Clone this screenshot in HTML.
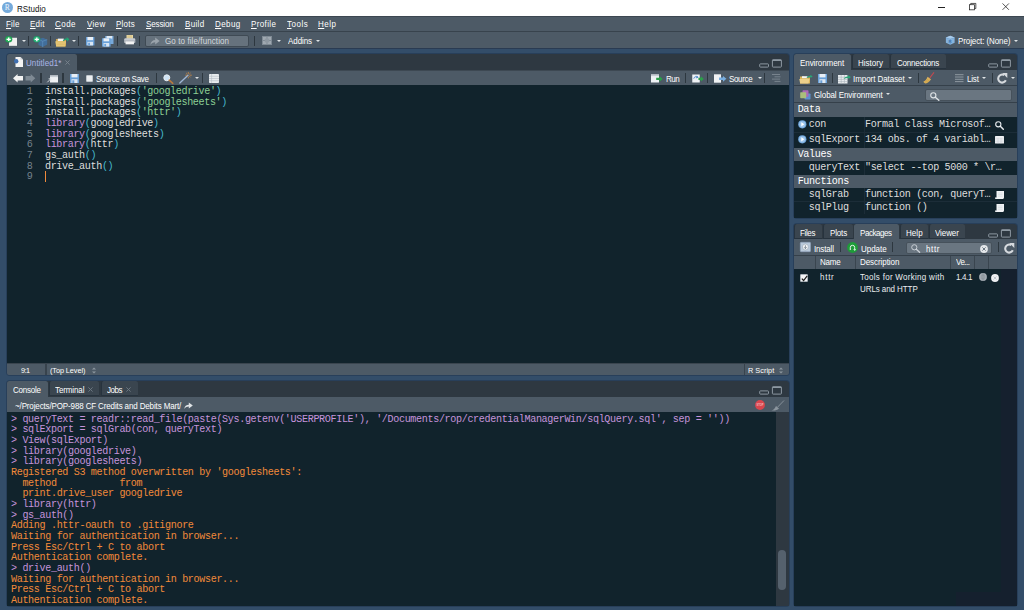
<!DOCTYPE html>
<html>
<head>
<meta charset="utf-8">
<title>RStudio</title>
<style>
*{box-sizing:border-box;margin:0;padding:0}
html,body{width:1024px;height:610px;overflow:hidden;background:#334d69;font-family:"Liberation Sans",sans-serif}
.a,.u,.m,.sep{position:absolute}
.u{font-family:"Liberation Sans",sans-serif;font-size:8.7px;line-height:10px;color:#fff;white-space:nowrap;transform:scaleX(.92);transform-origin:0 0}
.m{font-family:"Liberation Mono",monospace;font-size:10.1px;letter-spacing:-0.371px;line-height:10.667px;color:#dedede;white-space:pre}
.chrome{background:#4d5a66}
.dark{background:#11232c}
.tabrow{background:#2e3841}
.itab{background:#3a454f;border-radius:2.5px 2.5px 0 0;border-left:1px solid #27333e;border-bottom:1px solid #27333e}
.ol{position:absolute;background:#283f5a;border-radius:4px}
.bl{position:absolute;height:1px;background:#3d4852}
.atab{background:#4d5a66;border-radius:2.5px 2.5px 0 0}
.sep{width:1.200px;background:#2d373f;height:10px;margin-left:-0.200px}
.k{color:#c594db}.p{color:#47b9cc}.s{color:#8ccf94}
.ci{color:#c594db}.co{color:#f28a3a}
.ar{position:absolute;width:0;height:0;border-left:2px solid transparent;border-right:2px solid transparent;border-top:2.5px solid #dfe3e6}
svg{position:absolute;overflow:visible}
u{text-decoration-thickness:0.700px;text-underline-offset:1.100px}
</style>
</head>
<body>
<!-- ================= TITLE BAR ================= -->
<div class="a" style="left:0;top:0;width:1024px;height:16.5px;background:#fff"></div>
<div class="a" style="left:1.7px;top:2.2px;width:11px;height:11px;border-radius:50%;background:#75aadb"></div>
<div class="u" style="left:4.700px;top:3.100px;font-family:'Liberation Serif',serif;font-size:7.600px;line-height:9px;color:#eef5fb;transform:none">R</div>
<div class="u" style="left:16.8px;top:3.7px;color:#111;letter-spacing:0.04px">RStudio</div>
<!-- window controls -->
<div class="a" style="left:938px;top:7.3px;width:7px;height:1px;background:#222"></div>
<svg style="left:969.400px;top:3.400px" width="7.700" height="7.700" viewBox="0 0 9 9"><rect x="0.5" y="2" width="6" height="6" fill="#fff" stroke="#222" stroke-width="0.9"/><path d="M2 2V0.5H8V6.5H6.5" fill="none" stroke="#222" stroke-width="0.9"/></svg>
<svg style="left:1002.200px;top:3.400px" width="7.900" height="7.700" viewBox="0 0 9 9"><path d="M0.5 0.5L8 8M8 0.5L0.5 8" stroke="#222" stroke-width="0.9" fill="none"/></svg>

<!-- ================= MENU BAR ================= -->
<div class="a" style="left:0;top:16.3px;width:1024px;height:15.4px;background:#4d5a66;border-top:1.2px solid #3c4751"></div>
<div class="u" style="left:5.8px;top:19.2px;letter-spacing:0.18px"><u>F</u>ile</div>
<div class="u" style="left:30.1px;top:19.2px;letter-spacing:0.28px"><u>E</u>dit</div>
<div class="u" style="left:55.3px;top:19.2px;letter-spacing:0.50px"><u>C</u>ode</div>
<div class="u" style="left:86.5px;top:19.2px;letter-spacing:0.35px"><u>V</u>iew</div>
<div class="u" style="left:116.0px;top:19.2px;letter-spacing:0.24px"><u>P</u>lots</div>
<div class="u" style="left:145.8px;top:19.2px;letter-spacing:-0.14px"><u>S</u>ession</div>
<div class="u" style="left:185.1px;top:19.2px;letter-spacing:0.37px"><u>B</u>uild</div>
<div class="u" style="left:215.3px;top:19.2px;letter-spacing:0.47px"><u>D</u>ebug</div>
<div class="u" style="left:251.3px;top:19.2px;letter-spacing:0.40px"><u>P</u>rofile</div>
<div class="u" style="left:286.8px;top:19.2px;letter-spacing:0.54px"><u>T</u>ools</div>
<div class="u" style="left:318.3px;top:19.2px;letter-spacing:0.53px"><u>H</u>elp</div>

<!-- ================= MAIN TOOLBAR ================= -->
<div class="a" style="left:0;top:31.2px;width:1024px;height:17.6px;background:#4d5a66;border-top:1.2px solid #38434d;border-bottom:1.4px solid #2a3b52"></div>
<div id="tb-icons">
<!-- new file -->
<svg style="left:4.500px;top:35.500px" width="13" height="10.600" viewBox="0 0 13 12" preserveAspectRatio="none"><path d="M4 2h8v9.300H4z" fill="#f0f0f0"/><path d="M4 10.300h8v1H4z" fill="#cfd3d6"/><circle cx="3.700" cy="3.700" r="3.600" fill="#1f9a4d"/><circle cx="3.700" cy="3.700" r="2.900" fill="#2fb463"/><path d="M1.600 3.700h4.200M3.700 1.600v4.200" stroke="#fff" stroke-width="1.400"/></svg>
<div class="ar" style="left:21.500px;top:39.800px"></div>
<div class="sep" style="left:28px;top:35.500px"></div>
<!-- new project -->
<svg style="left:32.500px;top:35.500px" width="15" height="11.800" viewBox="0 0 15 13" preserveAspectRatio="none"><path d="M5.500 3.500l4.500-1.500 4.200 2v5.500l-4.500 2.700-4.200-2.400z" fill="#3f72a4" opacity="0.850"/><path d="M9.700 5.800v6.400M5.500 3.700l4.200 2.100 4.500-1.800" stroke="#6fa0cf" stroke-width="0.600" fill="none" opacity="0.800"/><circle cx="3.800" cy="3.700" r="3.600" fill="#1f9a66"/><circle cx="3.800" cy="3.700" r="2.900" fill="#2fb47e"/><path d="M1.700 3.700h4.200M3.800 1.600v4.200" stroke="#fff" stroke-width="1.400"/></svg>
<div class="sep" style="left:50.300px;top:35.500px"></div>
<!-- open folder -->
<svg style="left:55px;top:35.500px" width="15" height="11" viewBox="0 0 15 11"><path d="M1 3h3.500l1 1H11v6.500H1z" fill="#c9a24a"/><path d="M2.800 2.600h6v2.400h-6z" fill="#f1f1f1"/><path d="M0.300 5.300h10.700l-1 5.200H1.200z" fill="#e6c878"/><path d="M1.500 7h8.500M1.700 8.600h8" stroke="#d4b060" stroke-width="0.500"/><path d="M7.800 4.400c1.200-1.700 2.800-2 4-1.900l-.2-1.500 2.900 2.300-2.500 2.100 0-1.400c-1.400-.200-2.800.300-3.400 1.200z" fill="#22a373"/></svg>
<div class="ar" style="left:72px;top:39.800px"></div>
<div class="sep" style="left:78.300px;top:35.500px"></div>
<!-- save -->
<svg style="left:86px;top:36.600px" width="8.800" height="8.800" viewBox="0 0 10 10"><path d="M0 0h9.600v9.600H0z" fill="#6aa1d9"/><path d="M1.600 0h6.400v3.600H1.600z" fill="#e9f0f7"/><path d="M1.600 5.500h6.400v4.100H1.600z" fill="#d9e6f3"/><path d="M2.500 6.600h2v3h-2z" fill="#6aa1d9"/></svg>
<!-- save all -->
<svg style="left:102px;top:35.600px" width="12" height="11" viewBox="0 0 12 11"><path d="M3.200 0h8.300v8H3.200z" fill="#78a9da"/><path d="M4.600 0h5.600v2.600H4.600z" fill="#dfe9f3"/><path d="M0 2.300h8.600v8.300H0z" fill="#6aa1d9"/><path d="M1.500 2.300h5.700v3H1.500z" fill="#e9f0f7"/><path d="M1.500 7h5.700v3.600H1.500z" fill="#d9e6f3"/><path d="M2.300 7.900h1.800v2.700H2.300z" fill="#6aa1d9"/></svg>
<div class="sep" style="left:117.300px;top:35.500px"></div>
<!-- print -->
<svg style="left:124.200px;top:34.900px" width="11.500" height="10.400" viewBox="0 0 12 12" preserveAspectRatio="none"><path d="M2.600 0h6.800v4.500H2.600z" fill="#e6d5a0"/><path d="M3.600 1.200h4.800M3.600 2.600h4.800" stroke="#c9b67a" stroke-width="0.600"/><rect x="0.300" y="3.800" width="11.400" height="5.200" rx="1" fill="#c5cad0"/><path d="M0.300 6.200h11.400v2.800H0.300z" fill="#aeb4bb"/><path d="M1.600 7.400h8.800v3.400H1.600z" fill="#f3f3f3"/></svg>
<div class="sep" style="left:139.200px;top:35.500px"></div>
<!-- go to file/function -->
<div class="a" style="left:144.6px;top:34.6px;width:104px;height:12px;background:#66727d;border:1px solid #3f4a54;border-radius:2px"></div>
<svg style="left:150px;top:37px" width="10" height="8" viewBox="0 0 10 8"><path d="M0.3 8C0.8 4.8 2.8 3 5.2 3V0.6L9.6 4 5.2 7.4V5.2C3.2 5.2 1.6 6 0.3 8z" fill="#9aa3ab"/></svg>
<div class="u" style="left:164.8px;top:36px;color:#d3d8dc;letter-spacing:0.11px">Go to file/function</div>
<div class="sep" style="left:254.400px;top:35.500px"></div>
<!-- grid icon -->
<svg style="left:262px;top:36px" width="10" height="9" viewBox="0 0 10 9"><rect width="10" height="9" fill="#7f8a94"/><path d="M1 1h3.500v3H1zM5.500 1H9v3H5.500zM1 5h3.500v3H1zM5.500 5H9v3H5.500z" fill="#a0a9b1"/><rect x="2.800" y="2.600" width="4.400" height="3.800" fill="#8e98a1"/></svg>
<div class="ar" style="left:277.2px;top:39.8px"></div>
<div class="u" style="left:287.6px;top:36px;letter-spacing:-0.07px">Addins</div>
<div class="ar" style="left:316.2px;top:39.8px"></div>
<!-- project -->
<svg style="left:944.600px;top:35px" width="10.500" height="10.300" viewBox="0 0 12 11"><path d="M1 2.500L6 0.500l5 2v6L6 10.800 1 8.500z" fill="#86b3dd"/><path d="M6 3.700V10.800M1 2.600l5 1.300 5-1.300" stroke="#5a8fc4" stroke-width="0.600" fill="none"/><path d="M1 2.500L6 0.500l5 2L6 3.800z" fill="#a9cbea"/><text x="3.900" y="8.300" font-size="5" font-family="Liberation Sans" fill="#3f74ad" font-weight="bold">R</text></svg>
<div class="u" style="left:958.3px;top:36px;letter-spacing:-0.10px">Project: (None)</div>
<div class="ar" style="left:1014px;top:39.8px"></div>
</div>

<!-- pane outlines -->
<div class="ol" style="left:6px;top:53px;width:784px;height:323px"></div>
<div class="ol" style="left:6px;top:380px;width:784px;height:227px"></div>
<div class="ol" style="left:793px;top:53px;width:225px;height:166px"></div>
<div class="ol" style="left:793px;top:223px;width:225px;height:384px"></div>
<!-- ================= SOURCE PANE ================= -->
<div class="a tabrow" style="left:6.500px;top:53.7px;width:782px;height:17px;border-radius:3px 3px 0 0"></div>
<div class="a atab" style="left:6.500px;top:53.7px;width:70.500px;height:17px"></div>
<div class="a chrome" style="left:6.500px;top:70px;width:782px;height:15.3px"></div>
<div class="a dark" style="left:6.500px;top:85.4px;width:782px;height:278.5px"></div>
<div class="a chrome" style="left:6.500px;top:363.3px;width:782px;height:12px;border-top:1px solid #3a454f;border-radius:0 0 2px 2px"></div>
<div class="bl" style="left:77px;top:70px;width:711.500px"></div>
<div class="bl" style="left:851px;top:70px;width:166.300px"></div>
<div id="src-items">
<!-- tab -->
<svg style="left:13.8px;top:56.6px" width="9" height="10" viewBox="0 0 9 10"><path d="M1.5 0h5L9 2.5V10H1.5z" fill="#f4f4f4"/><path d="M6.5 0v2.5H9z" fill="#c9ced3"/><circle cx="2.2" cy="4.3" r="2.2" fill="#3f6fb0"/></svg>
<div class="u" style="left:26.1px;top:58.2px;color:#aab5e6;letter-spacing:0.09px">Untitled1*</div>
<svg style="left:65.3px;top:60.3px" width="5" height="5" viewBox="0 0 5 5"><path d="M0.4 0.4L4.6 4.6M4.6 0.4L0.4 4.6" stroke="#7d8892" stroke-width="0.800"/></svg>
<!-- pane min/max -->
<svg style="left:758.5px;top:59.2px" width="24" height="9" viewBox="0 0 24 9"><rect x="0.700" y="4.900" width="8.800" height="3.200" rx="0.700" fill="none" stroke="#8d98a2" stroke-width="1"/><rect x="13.400" y="0.800" width="9" height="7.300" rx="0.700" fill="none" stroke="#8d98a2" stroke-width="1"/><path d="M13.400 1.300h9" stroke="#8d98a2" stroke-width="1.400"/></svg>
<!-- toolbar -->
<svg style="left:13px;top:74.200px" width="23" height="9" viewBox="0 0 23 9"><path d="M0 4.300L4.600 0v2H10v4.600H4.600v2z" fill="#f2f2f2"/><path d="M22.300 4.300L17.700 0v2h-5.200v4.600h5.200v2z" fill="#7f8a94"/></svg>
<div class="sep" style="left:40.5px;top:72.8px"></div>
<svg style="left:46.5px;top:74.5px" width="11" height="8" viewBox="0 0 11 8"><path d="M3 0.5h8v7H3z" fill="#eef1f4"/><path d="M3 0.5h8v1.6H3z" fill="#c4cbd2"/><path d="M0.3 7.3L3.6 4M1.6 3.8h2.2v2.2" stroke="#dfe4e8" stroke-width="0.9" fill="none"/></svg>
<div class="sep" style="left:62.6px;top:72.8px"></div>
<svg style="left:70px;top:74px" width="9" height="9" viewBox="0 0 9 9"><path d="M0 0h9v9H0z" fill="#6aa1d9"/><path d="M1.5 0h6v3.4h-6z" fill="#e8eef5"/><path d="M1.5 5.2h6V9h-6z" fill="#dfe8f2"/><path d="M2.3 6.3h2v2.7h-2z" fill="#6aa1d9"/></svg>
<div class="a" style="left:85.6px;top:75px;width:7.4px;height:7.4px;background:#eceff1;border:0.8px solid #bfc6cc;border-radius:1px"></div>
<div class="u" style="left:96px;top:74px;letter-spacing:-0.330px">Source on Save</div>
<div class="sep" style="left:156.3px;top:72.8px"></div>
<svg style="left:163px;top:73.5px" width="11" height="10" viewBox="0 0 11 10"><circle cx="3.8" cy="3.8" r="3" fill="#cfe3f5" stroke="#e8eef3" stroke-width="1"/><path d="M6.2 6.2L9.8 9.3" stroke="#b8793f" stroke-width="1.6" stroke-linecap="round"/></svg>
<svg style="left:179px;top:72px" width="14" height="12" viewBox="0 0 14 12"><path d="M0.8 11L9 3.2" stroke="#9fb7d6" stroke-width="1.3" stroke-linecap="round"/><path d="M9.3 0v2M9.3 4.6v1.8M6.3 3.2h2M10.6 3.2h2.2M7.2 1l1.2 1.2M11.5 1l-1.2 1.2M11.5 5.3l-1.2-1.2" stroke="#e0913f" stroke-width="0.7"/></svg>
<div class="ar" style="left:195.3px;top:77.3px"></div>
<div class="sep" style="left:202.3px;top:72.8px"></div>
<svg style="left:209px;top:73.5px" width="10" height="9" viewBox="0 0 10 9"><rect width="10" height="9" rx="0.8" fill="#e8ecef"/><path d="M0 2.3h10M0 4.5h10M0 6.7h10M2.6 0v9" stroke="#b5bdc4" stroke-width="0.6"/></svg>
<!-- right part of toolbar -->
<svg style="left:651px;top:73.8px" width="12" height="9" viewBox="0 0 12 9"><path d="M0 0.5h8v8H0z" fill="#eef1f4"/><path d="M0 0.5h8v1.6H0z" fill="#c4cbd2"/><path d="M5.2 3.7h3.2V2l3.3 2.9-3.3 2.9V6.1H5.2z" fill="#2ba04a"/></svg>
<div class="u" style="left:665.800px;top:74px;letter-spacing:-0.550px">Run</div>
<div class="sep" style="left:685px;top:72.800px"></div>
<svg style="left:692px;top:73.800px" width="12.500" height="9" viewBox="0 0 12 9"><path d="M0 0.500h7.500v8H0z" fill="#eef1f4"/><path d="M1.500 4.600c.500-2 2.600-2.500 4-1.400M4.200 1.800l1.500 1.500-2 .600" stroke="#3f7fc4" stroke-width="0.900" fill="none"/><path d="M6.2 3.7h2.4V2.2l3 2.7-3 2.7V6.1H6.2z" fill="#2ba04a"/></svg>
<div class="sep" style="left:707.2px;top:72.8px"></div>
<svg style="left:713.7px;top:73.8px" width="13" height="9" viewBox="0 0 13 9"><path d="M0 0.3h7v8.4H0z" fill="#f0f2f4"/><path d="M5 3.6h4V1.9l3.4 2.9L9 7.7V6H5z" fill="#78aee0"/></svg>
<div class="u" style="left:728.500px;top:74px;letter-spacing:-0.360px">Source</div>
<div class="ar" style="left:757.8px;top:77.3px"></div>
<div class="sep" style="left:764.3px;top:72.8px"></div>
<svg style="left:772px;top:73.8px" width="9" height="8" viewBox="0 0 9 8"><path d="M0 0.5h8M2.5 2.8h6M0 5.1h8M2.5 7.4h6" stroke="#7d8892" stroke-width="0.9"/></svg>
<!-- editor -->
<div class="m" style="left:6.3px;top:87px;width:26.2px;text-align:right;color:#75828c">1
2
3
4
5
6
7
8
9</div>
<div class="m" style="left:45px;top:87px">install.packages<span class="p">(</span><span class="s">'googledrive'</span><span class="p">)</span>
install.packages<span class="p">(</span><span class="s">'googlesheets'</span><span class="p">)</span>
install.packages<span class="p">(</span><span class="s">'httr'</span><span class="p">)</span>
<span class="k">library</span><span class="p">(</span>googledrive<span class="p">)</span>
<span class="k">library</span><span class="p">(</span>googlesheets<span class="p">)</span>
<span class="k">library</span><span class="p">(</span>httr<span class="p">)</span>
gs_auth<span class="p">()</span>
drive_auth<span class="p">()</span></div>
<div class="a" style="left:45px;top:171.3px;width:1.1px;height:10.6px;background:#f08a3c"></div>
<!-- status bar -->
<div class="sep" style="left:45.5px;top:364.3px;height:11px;background:#38434d"></div>
<div class="u" style="left:21.1px;top:366px;font-size:7.9px;letter-spacing:-0.59px">9:1</div>
<div class="u" style="left:50.4px;top:366px;font-size:7.9px;letter-spacing:-0.06px">(Top Level)</div>
<svg style="left:92.3px;top:367.3px" width="4" height="7" viewBox="0 0 4 7"><path d="M0 2.6L2 0.4l2 2.2zM0 4.4l2 2.2 2-2.2z" fill="#8d979f"/></svg>
<div class="sep" style="left:743.8px;top:364.3px;height:11px;background:#38434d"></div>
<div class="u" style="left:747.8px;top:366px;font-size:7.9px;letter-spacing:0.06px">R Script</div>
<svg style="left:778.7px;top:367.3px" width="4" height="7" viewBox="0 0 4 7"><path d="M0 2.6L2 0.4l2 2.2zM0 4.4l2 2.2 2-2.2z" fill="#8d979f"/></svg>
</div>

<!-- ================= CONSOLE PANE ================= -->
<div class="a tabrow" style="left:6.500px;top:380.7px;width:782px;height:17px;border-radius:3px 3px 0 0"></div>
<div class="a atab" style="left:6.500px;top:380.7px;width:41.500px;height:17px"></div>
<div class="a itab" style="left:49px;top:380.7px;width:50.4px;height:15.3px"></div>
<div class="a itab" style="left:100.500px;top:380.700px;width:37px;height:15.300px"></div>
<div class="a chrome" style="left:6.500px;top:396.5px;width:782px;height:15.5px"></div>
<div class="a dark" style="left:6.500px;top:412px;width:782px;height:193.800px"></div>
<div class="a tabrow" style="left:776px;top:412px;width:13px;height:193.800px"></div>
<div class="a" style="left:777.8px;top:550px;width:8.2px;height:40px;border-radius:4px;background:#55616d"></div>
<div id="con-items">
<div class="u" style="left:12.9px;top:384.6px;letter-spacing:-0.26px">Console</div>
<div class="u" style="left:54.8px;top:384.6px;letter-spacing:-0.12px">Terminal</div>
<svg style="left:87.8px;top:387.3px" width="5" height="5" viewBox="0 0 5 5"><path d="M0.4 0.4L4.6 4.6M4.6 0.4L0.4 4.6" stroke="#6f7a84" stroke-width="0.9"/></svg>
<div class="u" style="left:106.8px;top:384.6px;letter-spacing:-0.54px">Jobs</div>
<svg style="left:125.8px;top:387.3px" width="5" height="5" viewBox="0 0 5 5"><path d="M0.4 0.4L4.6 4.6M4.6 0.4L0.4 4.6" stroke="#6f7a84" stroke-width="0.9"/></svg>
<svg style="left:758.5px;top:386.2px" width="24" height="9" viewBox="0 0 24 9"><rect x="0.700" y="4.900" width="8.800" height="3.200" rx="0.700" fill="none" stroke="#8d98a2" stroke-width="1"/><rect x="13.400" y="0.800" width="9" height="7.300" rx="0.700" fill="none" stroke="#8d98a2" stroke-width="1"/><path d="M13.400 1.300h9" stroke="#8d98a2" stroke-width="1.400"/></svg>
<div class="u" style="left:15.4px;top:400.7px;letter-spacing:-0.14px">~/Projects/POP-988 CF Credits and Debits Mart/</div>
<svg style="left:184px;top:401.5px" width="9" height="7" viewBox="0 0 9 7"><path d="M0.3 7C0.6 4.2 2.4 2.8 4.8 2.8V0.6L8.8 3.6 4.8 6.6V4.6C3 4.6 1.5 5.3 0.3 7z" fill="#dfe3e6"/></svg>
<svg style="left:755px;top:400px" width="10" height="10" viewBox="0 0 10 10"><circle cx="5" cy="5" r="4.900" fill="#d8464e"/><text x="5" y="6.100" font-size="3.300" font-family="Liberation Sans" font-weight="bold" fill="#f2b9bc" text-anchor="middle" textLength="7" lengthAdjust="spacingAndGlyphs">STOP</text></svg>
<svg style="left:770.500px;top:399.500px" width="14" height="11" viewBox="0 0 14 11"><path d="M13 0.500L6.500 7.200" stroke="#8b959e" stroke-width="0.900"/><path d="M0.300 10.400c2.200-.500 3.800-2.200 4.700-4.500l3 2.500c-1.800 1.800-4.400 2.500-7.700 2z" fill="#8b959e"/></svg>
<div class="m ci" style="left:11px;top:414.5px;letter-spacing:-0.352px">&gt; queryText = readr::read_file(paste(Sys.getenv('USERPROFILE'), '/Documents/rop/credentialManagerWin/sqlQuery.sql', sep = ''))
&gt; sqlExport = sqlGrab(con, queryText)
&gt; View(sqlExport)
&gt; library(googledrive)
&gt; library(googlesheets)
<span class="co">Registered S3 method overwritten by 'googlesheets':
  method           from       
  print.drive_user googledrive</span>
&gt; library(httr)
&gt; gs_auth()
<span class="co">Adding .httr-oauth to .gitignore
Waiting for authentication in browser...
Press Esc/Ctrl + C to abort
Authentication complete.</span>
&gt; drive_auth()
<span class="co">Waiting for authentication in browser...
Press Esc/Ctrl + C to abort
Authentication complete.</span></div>
</div>

<!-- ================= ENVIRONMENT PANE ================= -->
<div class="a tabrow" style="left:793.8px;top:53.7px;width:223.5px;height:17px;border-radius:3px 3px 0 0"></div>
<div class="a atab" style="left:793.8px;top:53.7px;width:57.4px;height:17px"></div>
<div class="a itab" style="left:852.2px;top:53.7px;width:37px;height:15.6px"></div>
<div class="a itab" style="left:890.2px;top:53.7px;width:56px;height:15.6px"></div>
<div class="a chrome" style="left:793.8px;top:70px;width:223.5px;height:15.2px"></div>
<div class="a" style="left:793.8px;top:85.2px;width:223.5px;height:1px;background:#35404a"></div>
<div class="a chrome" style="left:793.8px;top:86.2px;width:223.5px;height:16.4px"></div>
<div class="a" style="left:793.8px;top:102.4px;width:223.5px;height:1px;background:#35404a"></div>
<div class="a dark" style="left:793.8px;top:103.2px;width:223.5px;height:114.4px"></div>
<div class="a chrome" style="left:793.8px;top:103.2px;width:223.5px;height:14px"></div>
<div class="a chrome" style="left:793.8px;top:147.8px;width:223.5px;height:13.7px"></div>
<div class="a chrome" style="left:793.8px;top:175px;width:223.5px;height:13.2px"></div>
<div id="env-items">
<div class="u" style="left:800.0px;top:58.2px;letter-spacing:-0.08px">Environment</div>
<div class="u" style="left:857.8px;top:58.2px;letter-spacing:0.01px">History</div>
<div class="u" style="left:897.0px;top:58.2px;letter-spacing:-0.25px">Connections</div>
<svg style="left:988px;top:59.2px" width="24" height="9" viewBox="0 0 24 9"><rect x="0.700" y="4.900" width="8.800" height="3.200" rx="0.700" fill="none" stroke="#8d98a2" stroke-width="1"/><rect x="13.400" y="0.800" width="9" height="7.300" rx="0.700" fill="none" stroke="#8d98a2" stroke-width="1"/><path d="M13.400 1.300h9" stroke="#8d98a2" stroke-width="1.400"/></svg>
<!-- toolbar -->
<svg style="left:798.7px;top:73.5px" width="14" height="10" viewBox="0 0 14 10"><path d="M1 2.5h4l1 1h5v6H1z" fill="#d9b45a"/><path d="M0.3 5h10.2l-1 4.6H1.2z" fill="#ecd08a"/><path d="M3 2.2h5.5v2H3z" fill="#f4f4f4"/><path d="M7.5 3.2c1.5-1.4 3-1.4 4-1.2l-.6-1.3 2.8 1.6-2.2 2 .1-1.2c-1.2-.2-2.4 0-3.3.8z" fill="#2ba576"/></svg>
<svg style="left:818px;top:74px" width="9" height="9" viewBox="0 0 9 9"><path d="M0 0h9v9H0z" fill="#6aa1d9"/><path d="M1.5 0h6v3.4h-6z" fill="#e8eef5"/><path d="M1.5 5.2h6V9h-6z" fill="#dfe8f2"/><path d="M2.3 6.3h2v2.7h-2z" fill="#6aa1d9"/></svg>
<div class="sep" style="left:832.2px;top:72.8px"></div>
<svg style="left:838px;top:73.5px" width="14" height="10" viewBox="0 0 14 10"><rect x="0" y="1" width="9.5" height="8.5" fill="#e8ecef"/><path d="M0 3.2h9.5M0 5.4h9.5M0 7.6h9.5M3.2 1v8.5M6.4 1v8.5" stroke="#aab3bb" stroke-width="0.6"/><path d="M5.5 5c1.4-2 3-2.6 4.6-2.5l-.5-1.5 3.4 2-2.6 2.3 0-1.3c-1.400-.100-2.800.300-4.900 1z" fill="#2ba576"/></svg>
<div class="u" style="left:853.3px;top:74.2px;letter-spacing:-0.06px">Import Dataset</div>
<div class="ar" style="left:908.2px;top:77.4px"></div>
<div class="sep" style="left:918.2px;top:72.8px"></div>
<svg style="left:923.300px;top:72.300px" width="11.500" height="12" viewBox="0 0 11.500 12"><path d="M11 0.400L6.800 5.800" stroke="#c2494f" stroke-width="1.100"/><path d="M0.300 9.800c1.800-.700 3.400-2.600 4.300-5l3.400 2.500c-1.200 2.400-3.200 3.800-5.400 4.100-.900-.200-1.800-.800-2.300-1.600z" fill="#dcb25a"/><path d="M2.200 10.600l2.900-3.600M3.800 11l2.600-3.200" stroke="#b58f3c" stroke-width="0.500"/></svg>
<svg style="left:954.8px;top:74.3px" width="9" height="8" viewBox="0 0 9 8"><path d="M0 0.700h8.500M0 3h8.500M0 5.300h8.500M0 7.600h8.500" stroke="#9ea7af" stroke-width="0.800"/></svg>
<div class="u" style="left:966.8px;top:74.2px;letter-spacing:-0.20px">List</div>
<div class="ar" style="left:982.200px;top:77.400px"></div>
<div class="sep" style="left:992px;top:72.800px"></div>
<svg style="left:997px;top:72.800px" width="11" height="11" viewBox="0 0 11 11"><path d="M8.800 7.300A4 4 0 1 1 7.200 2.100" fill="none" stroke="#d6dade" stroke-width="2.100"/><path d="M5.300 0h5v5z" fill="#d6dade"/></svg>
<div class="ar" style="left:1010.700px;top:77.400px"></div>
<!-- global env row -->
<svg style="left:800px;top:89.700px" width="11" height="10" viewBox="0 0 11 10"><rect x="4.500" y="3.500" width="6" height="6" rx="0.700" fill="#5d8fd0"/><rect x="2.500" y="0.300" width="6" height="6.500" rx="0.700" fill="#a96ab8"/><rect x="0.200" y="2.200" width="6" height="6" rx="0.700" fill="#a9bf7b"/></svg>
<div class="u" style="left:813.8px;top:90.300px;letter-spacing:-0.10px">Global Environment</div>
<div class="ar" style="left:885.700px;top:93.400px"></div>
<div class="a" style="left:925.300px;top:89.300px;width:86.300px;height:12.100px;background:#6a7681;border:1px solid #46515b;border-radius:2px"></div>
<svg style="left:930px;top:91.600px" width="10" height="9" viewBox="0 0 10 9"><circle cx="3.300" cy="3.300" r="2.600" fill="none" stroke="#dfe3e6" stroke-width="1.100"/><path d="M5.300 5.300L8.800 8.300" stroke="#dfe3e6" stroke-width="1.500" stroke-linecap="round"/></svg>
<!-- section headers -->
<div class="m" style="left:797.700px;top:105.10px;color:#fff">Data</div>
<div class="m" style="left:797.700px;top:149.80px;color:#fff">Values</div>
<div class="m" style="left:797.700px;top:176.55px;color:#fff">Functions</div>
<!-- rows -->
<div class="a" style="left:794px;top:132.200px;width:223px;height:0.800px;background:#1c2d38"></div>
<div class="a" style="left:794px;top:201px;width:223px;height:0.800px;background:#1c2d38"></div>
<div class="a" style="left:864.300px;top:117.300px;width:0.800px;height:30.500px;background:#1c2d38"></div>
<div class="a" style="left:864.300px;top:161.500px;width:0.800px;height:13.500px;background:#1c2d38"></div>
<div class="a" style="left:864.300px;top:188.200px;width:0.800px;height:26px;background:#1c2d38"></div>
<svg style="left:797.800px;top:120.300px" width="9" height="9" viewBox="0 0 9 9"><circle cx="4.300" cy="4.300" r="4.100" fill="#6fa6dc"/><circle cx="4.300" cy="4.300" r="3.100" fill="#9cc4ea"/><path d="M3.300 2.200L6.300 4.300 3.300 6.400z" fill="#fff"/></svg>
<svg style="left:797.800px;top:135px" width="9" height="9" viewBox="0 0 9 9"><circle cx="4.300" cy="4.300" r="4.100" fill="#6fa6dc"/><circle cx="4.300" cy="4.300" r="3.100" fill="#9cc4ea"/><path d="M3.300 2.200L6.300 4.300 3.300 6.400z" fill="#fff"/></svg>
<div class="m" style="left:808.800px;top:120.40px">con</div>
<div class="m" style="left:865px;top:120.40px">Formal class Microsof…</div>
<div class="m" style="left:808.800px;top:134.80px">sqlExport</div>
<div class="m" style="left:865px;top:134.80px">134 obs. of 4 variabl…</div>
<div class="m" style="left:808.800px;top:163.20px">queryText</div>
<div class="m" style="left:865px;top:163.20px">"select --top 5000 * \r…</div>
<div class="m" style="left:808.800px;top:190.00px">sqlGrab</div>
<div class="m" style="left:865px;top:190.00px">function (con, queryT…</div>
<div class="m" style="left:808.800px;top:203.40px">sqlPlug</div>
<div class="m" style="left:865px;top:203.40px">function ()</div>
<svg style="left:994.500px;top:121px" width="9" height="9" viewBox="0 0 9 9"><circle cx="3.300" cy="3.300" r="2.600" fill="none" stroke="#e8ecef" stroke-width="1.100"/><path d="M5.300 5.300L8.300 8.200" stroke="#e8ecef" stroke-width="1.500" stroke-linecap="round"/></svg>
<svg style="left:995px;top:136px" width="9" height="8" viewBox="0 0 9 8"><rect width="9" height="7.500" rx="0.600" fill="#f1f3f5"/><path d="M0 2.200h9M0 4h9M0 5.800h9M3 2v5.500M6 2v5.500" stroke="#c4cbd1" stroke-width="0.500"/></svg>
<svg style="left:995px;top:190.500px" width="9" height="8" viewBox="0 0 9 8"><path d="M1.500 0h7.500v6.500c0 .800-.600 1.500-1.500 1.500H0.800C0.300 8 0 7.600 0 7.200V6.500h1.500z" fill="#f1f3f5"/><path d="M3 2h4.500M3 3.600h4.500M3 5.200h4.500" stroke="#c9cfd5" stroke-width="0.500"/></svg>
<svg style="left:995px;top:203.500px" width="9" height="8" viewBox="0 0 9 8"><path d="M1.500 0h7.500v6.500c0 .800-.600 1.500-1.500 1.500H0.800C0.300 8 0 7.600 0 7.200V6.500h1.500z" fill="#f1f3f5"/><path d="M3 2h4.500M3 3.600h4.500M3 5.200h4.500" stroke="#c9cfd5" stroke-width="0.500"/></svg>
</div>

<!-- ================= PACKAGES PANE ================= -->
<div class="a tabrow" style="left:793.8px;top:223.8px;width:223.5px;height:17px;border-radius:3px 3px 0 0"></div>
<div class="a itab" style="left:793.8px;top:223.8px;width:28.4px;height:15.6px"></div>
<div class="a itab" style="left:823.2px;top:223.8px;width:30px;height:15.6px"></div>
<div class="a atab" style="left:854.2px;top:223.8px;width:44.6px;height:17px"></div>
<div class="a itab" style="left:899.8px;top:223.8px;width:28.4px;height:15.6px"></div>
<div class="a itab" style="left:929.2px;top:223.8px;width:36.2px;height:15.6px"></div>
<div class="a chrome" style="left:793.8px;top:239.4px;width:223.5px;height:15.7px"></div>
<div class="a" style="left:793.8px;top:255px;width:223.5px;height:1px;background:#35404a"></div>
<div class="a chrome" style="left:793.8px;top:256px;width:223.5px;height:12.8px"></div>
<div class="a dark" style="left:793.8px;top:268.800px;width:223.500px;height:337px"></div>
<div id="pkg-items">
<div class="u" style="left:800.4px;top:227.800px;letter-spacing:-0.40px">Files</div>
<div class="u" style="left:829.5px;top:227.800px;letter-spacing:-0.17px">Plots</div>
<div class="u" style="left:860.0px;top:227.800px;letter-spacing:-0.47px">Packages</div>
<div class="u" style="left:905.5px;top:227.800px;letter-spacing:0.07px">Help</div>
<div class="u" style="left:935.2px;top:227.800px;letter-spacing:-0.09px">Viewer</div>
<svg style="left:988px;top:229.300px" width="24" height="9" viewBox="0 0 24 9"><rect x="0.700" y="4.900" width="8.800" height="3.200" rx="0.700" fill="none" stroke="#8d98a2" stroke-width="1"/><rect x="13.400" y="0.800" width="9" height="7.300" rx="0.700" fill="none" stroke="#8d98a2" stroke-width="1"/><path d="M13.400 1.300h9" stroke="#8d98a2" stroke-width="1.400"/></svg>
<!-- toolbar -->
<svg style="left:800px;top:242.200px" width="11" height="10" viewBox="0 0 11 10"><rect x="0.300" y="0.300" width="10.200" height="9.400" rx="0.800" fill="#b9c9da" stroke="#8ea3ba" stroke-width="0.600"/><circle cx="5.400" cy="5" r="3" fill="#f0f3f6" stroke="#8a98a6" stroke-width="0.500"/><path d="M5.400 3.300v3M4.200 5.300l1.200 1.300 1.200-1.300" stroke="#5a6773" stroke-width="0.700" fill="none"/></svg>
<div class="u" style="left:814.2px;top:243.800px;letter-spacing:-0.16px">Install</div>
<div class="sep" style="left:840.200px;top:242.300px"></div>
<svg style="left:847px;top:242px" width="11" height="11" viewBox="0 0 11 11"><circle cx="5.500" cy="5.500" r="5.400" fill="#1e9c39"/><path d="M3.300 8V5.500a2.200 2.200 0 0 1 4.400 0V8" fill="none" stroke="#e9f6ec" stroke-width="1"/><path d="M6.700 7.200l1 1.300 1-1.300" fill="none" stroke="#e9f6ec" stroke-width="0.800"/></svg>
<div class="u" style="left:860.8px;top:243.800px;letter-spacing:-0.03px">Update</div>
<div class="sep" style="left:892.300px;top:242.300px"></div>
<div class="a" style="left:906.200px;top:242.100px;width:86.300px;height:12.100px;background:#6a7681;border:1px solid #46515b;border-radius:2px"></div>
<svg style="left:911px;top:244.200px" width="10" height="9" viewBox="0 0 10 9"><circle cx="3.300" cy="3.300" r="2.600" fill="none" stroke="#c9cfd5" stroke-width="1"/><path d="M5.300 5.300L8.600 8.200" stroke="#c9cfd5" stroke-width="1.400" stroke-linecap="round"/></svg>
<div class="u" style="left:925.8px;top:243.600px;letter-spacing:0.67px">httr</div>
<svg style="left:979.500px;top:244.500px" width="8" height="8" viewBox="0 0 8 8"><circle cx="4" cy="4" r="3.900" fill="#e4e7ea"/><path d="M2.400 2.400l3.200 3.200M5.600 2.400L2.400 5.600" stroke="#6a7681" stroke-width="1"/></svg>
<div class="sep" style="left:998.200px;top:242.300px"></div>
<svg style="left:1003.500px;top:242.500px" width="11" height="11" viewBox="0 0 11 11"><path d="M8.800 7.300A4 4 0 1 1 7.200 2.100" fill="none" stroke="#d6dade" stroke-width="2.100"/><path d="M5.300 0h5v5z" fill="#d6dade"/></svg>
<!-- header -->
<div class="sep" style="left:815.200px;top:256px;height:12.800px;background:#3a454f"></div>
<div class="sep" style="left:855.200px;top:256px;height:12.800px;background:#3a454f"></div>
<div class="sep" style="left:950.400px;top:256px;height:12.800px;background:#3a454f"></div>
<div class="sep" style="left:974.200px;top:256px;height:12.800px;background:#3a454f"></div>
<div class="sep" style="left:988.200px;top:256px;height:12.800px;background:#3a454f"></div>
<div class="u" style="left:820.4px;top:257px;letter-spacing:-0.19px">Name</div>
<div class="u" style="left:860.4px;top:257px;letter-spacing:-0.06px">Description</div>
<div class="u" style="left:955.5px;top:257px;letter-spacing:-0.53px">Ve...</div>
<!-- row -->
<div class="a" style="left:800px;top:273.700px;width:8px;height:8px;background:#f4f5f6;border:0.700px solid #aab2b9;border-radius:1px"></div>
<svg style="left:801px;top:274.500px" width="7" height="7" viewBox="0 0 7 7"><path d="M0.800 3.600L2.600 5.500 6.200 0.800" fill="none" stroke="#1b1b1b" stroke-width="1.200"/></svg>
<div class="u" style="left:820.4px;top:272px;color:#eceef0;letter-spacing:0.81px">httr</div>
<div class="u" style="left:860.4px;top:272px;color:#eceef0;letter-spacing:0.32px">Tools for Working with</div>
<div class="u" style="left:860.4px;top:284.100px;color:#eceef0;letter-spacing:-0.08px">URLs and HTTP</div>
<div class="u" style="left:955.8px;top:272px;color:#eceef0;letter-spacing:-0.38px">1.4.1</div>
<svg style="left:978.900px;top:272.900px" width="8" height="8" viewBox="0 0 8 8"><circle cx="4" cy="4" r="3.900" fill="#aab1b8"/><path d="M0.300 4h7.400M4 0.200v7.600M1.200 1.800c1.800.800 3.800.800 5.600 0M1.200 6.200c1.800-.800 3.800-.800 5.600 0M4 0.200C2.300 2 2.300 6 4 7.800M4 0.200C5.700 2 5.700 6 4 7.800" stroke="#7a838c" stroke-width="0.400" fill="none"/></svg>
<svg style="left:991px;top:273.700px" width="8" height="8" viewBox="0 0 8 8"><circle cx="4" cy="4" r="3.900" fill="#eef0f2"/><path d="M2.500 2.500l3 3M5.500 2.500l-3 3" stroke="#b9c0c6" stroke-width="0.900"/></svg>
</div>

<!-- faint overlay tint (bottom-right) -->
<div class="a" style="left:1000.600px;top:269px;width:16.700px;height:322.500px;background:rgba(57,5,64,0.1)"></div>
<div class="a" style="left:955.500px;top:591.500px;width:61.800px;height:14.500px;background:rgba(57,5,64,0.1)"></div>
</body>
</html>
